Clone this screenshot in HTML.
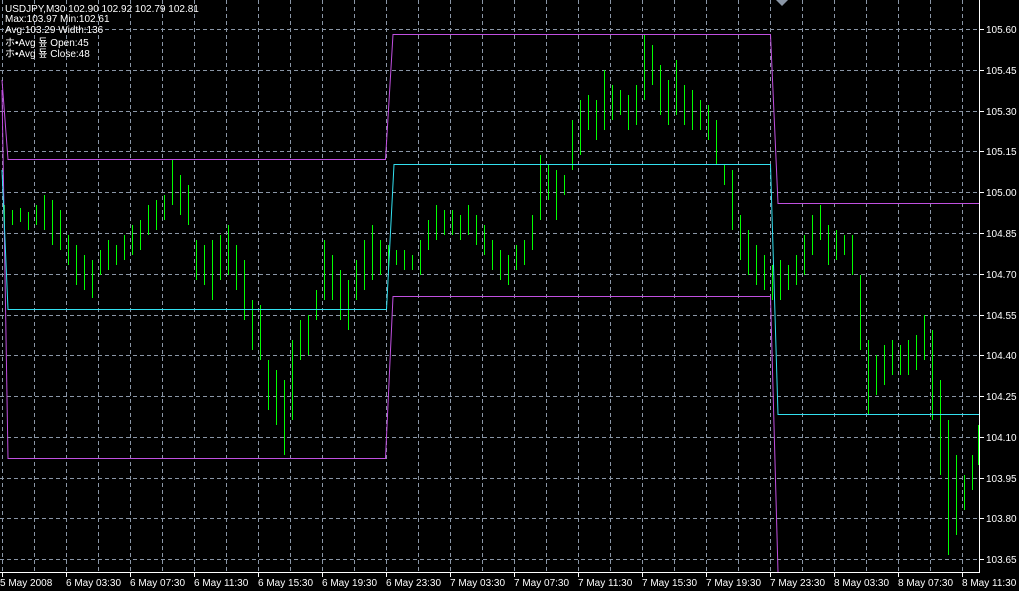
<!DOCTYPE html>
<html><head><meta charset="utf-8"><style>
html,body{margin:0;padding:0;background:#000;width:1019px;height:591px;overflow:hidden}
svg{display:block}
text{font-family:"Liberation Sans",sans-serif;font-size:10px;fill:#fff}
</style></head><body>
<svg width="1019" height="591" viewBox="0 0 1019 591">
<g stroke="#8a96a6" stroke-width="1" stroke-dasharray="4,3" fill="none">
<path d="M2.5 0V572M34.5 0V572M66.5 0V572M98.5 0V572M130.5 0V572M162.5 0V572M194.5 0V572M226.5 0V572M258.5 0V572M290.5 0V572M322.5 0V572M354.5 0V572M386.5 0V572M418.5 0V572M450.5 0V572M482.5 0V572M514.5 0V572M546.5 0V572M578.5 0V572M610.5 0V572M642.5 0V572M674.5 0V572M706.5 0V572M738.5 0V572M770.5 0V572M802.5 0V572M834.5 0V572M866.5 0V572M898.5 0V572M930.5 0V572M962.5 0V572"/>
<path d="M0 29.5H979M0 70.5H979M0 111.5H979M0 151.5H979M0 192.5H979M0 233.5H979M0 274.5H979M0 315.5H979M0 355.5H979M0 396.5H979M0 437.5H979M0 478.5H979M0 518.5H979M0 559.5H979"/>
</g>
<path d="M776 0h12l-6 6z" fill="#8a96a6"/>
<g stroke="#00ff00" stroke-width="1" fill="none">
<path d="M4.5 205V235M12.5 210V225M20.5 208V222M28.5 212V230M36.5 205V225M44.5 195V230M52.5 200V245M60.5 210V250M68.5 235V265M76.5 245V285M84.5 255V290M92.5 260V298M100.5 250V275M108.5 240V270M116.5 245V265M124.5 235V260M132.5 225V255M140.5 220V250M148.5 205V235M156.5 200V230M164.5 195V220M172.5 160V205M180.5 175V215M188.5 185V225M196.5 240V280M204.5 245V285M212.5 240V300M220.5 235V280M228.5 225V275M236.5 245V290M244.5 260V320M252.5 300V350M260.5 305V360M268.5 360V410M276.5 370V425M284.5 380V455M292.5 340V420M300.5 320V360M308.5 315V355M316.5 290V320M324.5 240V300M332.5 255V300M340.5 270V320M348.5 280V330M356.5 260V300M364.5 240V290M372.5 225V280M380.5 240V275M388.5 245V270M396.5 250V265M404.5 250V270M412.5 255V270M420.5 240V275M428.5 220V250M436.5 205V240M444.5 210V235M452.5 210V235M460.5 215V240M468.5 205V235M476.5 215V245M484.5 225V255M492.5 240V270M500.5 250V280M508.5 255V285M516.5 245V270M524.5 240V265M532.5 215V250M540.5 155V220M548.5 165V200M556.5 170V220M564.5 175V195M572.5 120V170M580.5 100V155M588.5 95V130M596.5 100V140M604.5 70V130M612.5 85V120M620.5 90V115M628.5 95V130M636.5 85V125M644.5 35V100M652.5 45V85M660.5 65V115M668.5 80V125M676.5 60V115M684.5 85V125M692.5 90V130M700.5 100V130M708.5 105V140M716.5 120V165M724.5 165V185M732.5 170V230M740.5 215V260M748.5 230V275M756.5 245V285M764.5 255V290M772.5 265V300M780.5 260V300M788.5 265V290M796.5 255V285M804.5 235V275M812.5 215V255M820.5 205V240M828.5 225V265M836.5 230V260M844.5 235V255M852.5 235V275M860.5 275V350M868.5 340V415M876.5 355V395M884.5 345V385M892.5 340V375M900.5 345V375M908.5 340V375M916.5 335V370M924.5 315V360M932.5 330V420M940.5 380V475M948.5 420V555M956.5 455V535M964.5 475V510M972.5 455V490M978.5 425V465"/>
</g>
<g fill="none" stroke-width="1">
<path d="M2 80L8 159.5H385.5L393 34.5H770.5L778 203.5H979" stroke="#c050e0"/>
<path d="M2 90L8 458.5H385.5L393 296.5H770.5L778 572" stroke="#c050e0"/>
<path d="M2 170L8 309.5H386.5L394 164.5H770.5L778 414.5H979" stroke="#33e0f0"/>
</g>
<path d="M979.5 0V572.5H0" stroke="#fff" fill="none"/>
<g>
<text x="5" y="12">USDJPY,M30  102.90 102.92 102.79 102.81</text>
<text x="5" y="22">Max:103.97 Min:102.61</text>
<text x="5" y="33">Avg:103.29 Width:136</text>
<text x="5" y="46">ホ•Avg 둎 Open:45</text>
<text x="5" y="57">ホ•Avg 둎 Close:48</text>
</g>
<g>
<text x="986" y="33">105.60</text><text x="986" y="74">105.45</text><text x="986" y="115">105.30</text><text x="986" y="155">105.15</text><text x="986" y="196">105.00</text><text x="986" y="237">104.85</text><text x="986" y="278">104.70</text><text x="986" y="319">104.55</text><text x="986" y="359">104.40</text><text x="986" y="400">104.25</text><text x="986" y="441">104.10</text><text x="986" y="482">103.95</text><text x="986" y="522">103.80</text><text x="986" y="563">103.65</text>
</g>
<g stroke="#fff"><path d="M980 29.5h4M980 70.5h4M980 111.5h4M980 151.5h4M980 192.5h4M980 233.5h4M980 274.5h4M980 315.5h4M980 355.5h4M980 396.5h4M980 437.5h4M980 478.5h4M980 518.5h4M980 559.5h4"/>
<path d="M2.5 573v4M66.5 573v4M130.5 573v4M194.5 573v4M258.5 573v4M322.5 573v4M386.5 573v4M450.5 573v4M514.5 573v4M578.5 573v4M642.5 573v4M706.5 573v4M770.5 573v4M834.5 573v4M898.5 573v4M962.5 573v4"/></g>
<g>
<text x="0" y="586">5 May 2008</text><text x="66" y="586">6 May 03:30</text><text x="130" y="586">6 May 07:30</text><text x="194" y="586">6 May 11:30</text><text x="258" y="586">6 May 15:30</text><text x="322" y="586">6 May 19:30</text><text x="386" y="586">6 May 23:30</text><text x="450" y="586">7 May 03:30</text><text x="514" y="586">7 May 07:30</text><text x="578" y="586">7 May 11:30</text><text x="642" y="586">7 May 15:30</text><text x="706" y="586">7 May 19:30</text><text x="770" y="586">7 May 23:30</text><text x="834" y="586">8 May 03:30</text><text x="898" y="586">8 May 07:30</text><text x="962" y="586">8 May 11:30</text>
</g>
</svg>
</body></html>
